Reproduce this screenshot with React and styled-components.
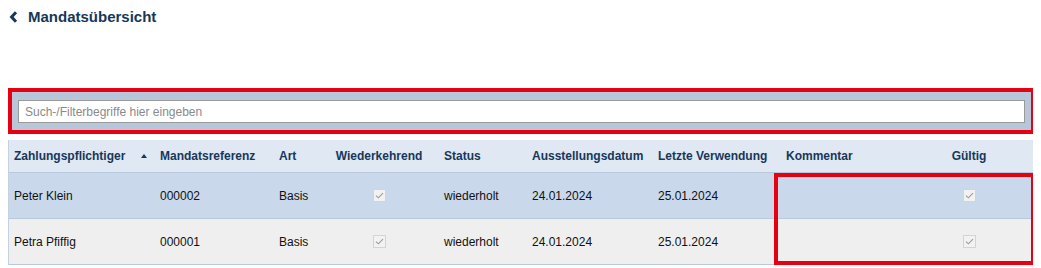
import styled, { createGlobalStyle } from "styled-components";

const GlobalStyle = createGlobalStyle`
    body {
        margin: 8px;
        background: #fff;
        font-family: "Liberation Sans", Arial, sans-serif;
    }
    * {
        box-sizing: border-box;
    }
`;

const columns = [
    { key: "name", label: "Zahlungspflichtiger", width: 146, sort: true },
    { key: "ref", label: "Mandatsreferenz", width: 119 },
    { key: "art", label: "Art", width: 57 },
    { key: "rec", label: "Wiederkehrend", width: 108, center: true, shift: 12 },
    { key: "status", label: "Status", width: 88 },
    { key: "issued", label: "Ausstellungsdatum", width: 126 },
    { key: "used", label: "Letzte Verwendung", width: 128 },
    { key: "comment", label: "Kommentar", width: 123 },
    { key: "valid", label: "Gültig", width: 130, center: true },
];

const rows = [
    { name: "Peter Klein", ref: "000002", art: "Basis", rec: true, status: "wiederholt", issued: "24.01.2024", used: "25.01.2024", comment: "", valid: true, selected: true },
    { name: "Petra Pfiffig", ref: "000001", art: "Basis", rec: true, status: "wiederholt", issued: "24.01.2024", used: "25.01.2024", comment: "", valid: true },
];

const gridCols = columns.map((c) => c.width + "px").join(" ");

function Check() {
    return (
        <CheckBox>
            <svg width="9" height="7" viewBox="0 0 9 7">
                <path d="M1 3.6 L3.4 5.8 L8 1.2" fill="none" stroke="#9a9a9a" strokeWidth="1.1" />
            </svg>
        </CheckBox>
    );
}

export default function App() {
    return (
        <>
            <GlobalStyle />
            <Header>
                <svg width="10" height="12" viewBox="0 0 10 12">
                    <path d="M7 1.3 L2.6 6 L7 10.7" fill="none" stroke="#17375a" strokeWidth="3" />
                </svg>
                <Title>Mandatsübersicht</Title>
            </Header>

            <SearchBar>
                <SearchInput placeholder="Such-/Filterbegriffe hier eingeben" />
            </SearchBar>

            <Table>
                <HeadRow>
                    {columns.map((c) => (
                        <HeadCell key={c.key} $center={c.center} $shift={c.shift}>
                            {c.label}
                            {c.sort && <SortArrow />}
                        </HeadCell>
                    ))}
                </HeadRow>
                <Body>
                    {rows.map((r, i) => (
                        <Row key={i} $selected={r.selected}>
                            {columns.map((c) => (
                                <Cell key={c.key} $center={c.center} $shift={c.shift}>
                                    {typeof r[c.key] === "boolean" ? (r[c.key] ? <Check /> : null) : r[c.key]}
                                </Cell>
                            ))}
                        </Row>
                    ))}
                    <Highlight />
                </Body>
            </Table>
        </>
    );
}

const Header = styled.div`
    display: flex;
    align-items: center;
    gap: 9px;
    height: 17px;
    padding-left: 1px;
`;

const Title = styled.h1`
    margin: 0;
    font-size: 15px;
    font-weight: bold;
    color: #17375a;
`;

const SearchBar = styled.div`
    margin-top: 63px;
    width: 1027px;
    padding: 8px 6px 7px 6px;
    background: #b8c6d9;
    border: 4px solid #e60012;
`;

const SearchInput = styled.input`
    display: block;
    width: 100%;
    height: 23px;
    border: 1px solid #999;
    padding: 0 6px;
    font-family: "Liberation Sans", Arial, sans-serif;
    font-size: 12px;
    color: #333;
    outline: none;
    &::placeholder {
        color: #8a8a8a;
    }
`;

const Table = styled.div`
    margin-top: 6px;
    width: 1027px;
    border-left: 1px solid #c3d1e2;
    border-right: 1px solid #c3d1e2;
    font-size: 12px;
`;

const HeadRow = styled.div`
    display: grid;
    grid-template-columns: ${gridCols};
    height: 33px;
    align-items: center;
    background: #dfe8f3;
    border-bottom: 1px solid #b9c9dc;
`;

const HeadCell = styled.div`
    display: flex;
    align-items: center;
    justify-content: ${(p) => (p.$center ? "center" : "flex-start")};
    padding: 0 ${(p) => 5 + (p.$shift || 0)}px 0 5px;
    font-weight: bold;
    color: #17375a;
    white-space: nowrap;
`;

const SortArrow = styled.span`
    margin-left: 16px;
    width: 0;
    height: 0;
    border-left: 3.5px solid transparent;
    border-right: 3.5px solid transparent;
    border-bottom: 4px solid #17375a;
`;

const Body = styled.div`
    position: relative;
`;

const Row = styled.div`
    display: grid;
    grid-template-columns: ${gridCols};
    height: 46px;
    align-items: center;
    background: ${(p) => (p.$selected ? "#c9d9eb" : "#efefef")};
    border-bottom: 1px solid #b9c9dc;
`;

const Cell = styled.div`
    display: flex;
    align-items: center;
    justify-content: ${(p) => (p.$center ? "center" : "flex-start")};
    padding: 0 ${(p) => 5 + (p.$shift || 0)}px 0 5px;
    color: #111;
    white-space: nowrap;
`;

const CheckBox = styled.span`
    display: inline-flex;
    align-items: center;
    justify-content: center;
    width: 13px;
    height: 13px;
    background: #f2f2f2;
    border: 1px solid #d4d4d4;
`;

const Highlight = styled.div`
    position: absolute;
    left: 765px;
    right: -1px;
    top: 0;
    bottom: 0;
    border: 4px solid #e60012;
    pointer-events: none;
`;
